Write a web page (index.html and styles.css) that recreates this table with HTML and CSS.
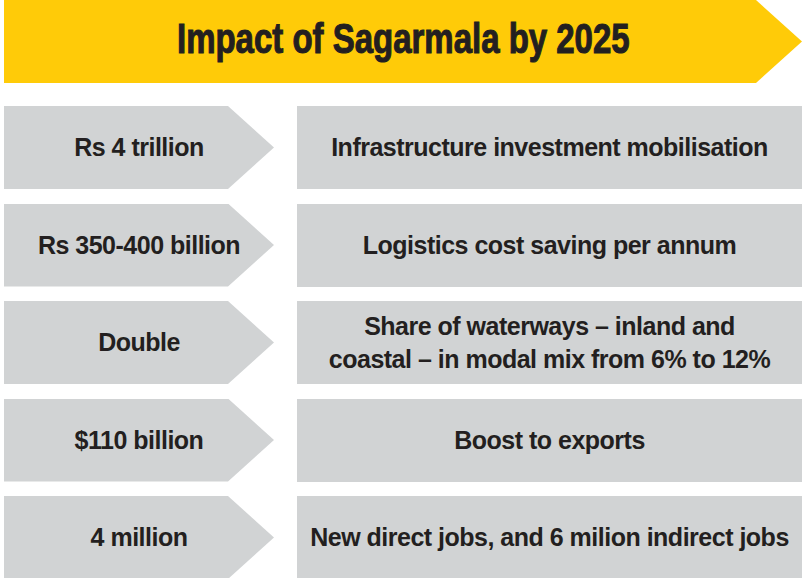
FILE: index.html
```html
<!DOCTYPE html>
<html lang="en">
<head>
<meta charset="utf-8">
<title>Impact of Sagarmala by 2025</title>
<link rel="stylesheet" href="styles.css">
</head>
<body>
<div class="page">
  <header class="banner"><h1 class="title"><span class="title-text">Impact of Sagarmala by 2025</span></h1></header>
  <div class="rows">
    <div class="row">
      <div class="figure">Rs 4 trillion</div>
      <div class="desc">Infrastructure investment mobilisation</div>
    </div>
    <div class="row">
      <div class="figure">Rs 350-400 billion</div>
      <div class="desc">Logistics cost saving per annum</div>
    </div>
    <div class="row">
      <div class="figure">Double</div>
      <div class="desc">Share of waterways – inland and<br>coastal – in modal mix from 6% to 12%</div>
    </div>
    <div class="row">
      <div class="figure">$110 billion</div>
      <div class="desc">Boost to exports</div>
    </div>
    <div class="row">
      <div class="figure">4 million</div>
      <div class="desc">New direct jobs, and 6 milion indirect jobs</div>
    </div>
  </div>
</div>
</body>
</html>
```
FILE: styles.css
```css
html, body {
  margin: 0;
  padding: 0;
  background: #ffffff;
}
body {
  width: 804px;
  height: 578px;
  overflow: hidden;
  font-family: "Liberation Sans", Arial, sans-serif;
  color: #231f20;
}
.page {
  padding-left: 4px;
}
.banner {
  width: 798px;
  height: 83px;
  background: #ffcb08;
  clip-path: polygon(0 0, 752px 0, 100% 50%, 752px 100%, 0 100%);
  display: flex;
  align-items: center;
  justify-content: center;
}
.title {
  margin: 0 0 6px 0;
  font-size: 42px;
  font-weight: bold;
  line-height: 1;
  white-space: nowrap;
}
.title-text {
  display: inline-block;
  transform: scaleX(0.785);
  -webkit-text-stroke: 1.1px #231f20;
}
.rows {
  margin-top: 23px;
  display: flex;
  flex-direction: column;
  gap: 14.5px;
}
.row {
  display: grid;
  grid-template-columns: 270px 505px;
  column-gap: 23px;
  height: 83px;
}
.figure, .desc {
  background: #d1d3d4;
  display: flex;
  align-items: center;
  justify-content: center;
  text-align: center;
  font-size: 25px;
  font-weight: bold;
  letter-spacing: -0.5px;
  line-height: 33px;
  white-space: nowrap;
}
.figure {
  clip-path: polygon(0 0, 224px 0, 100% 50%, 224px 100%, 0 100%);
}
```
